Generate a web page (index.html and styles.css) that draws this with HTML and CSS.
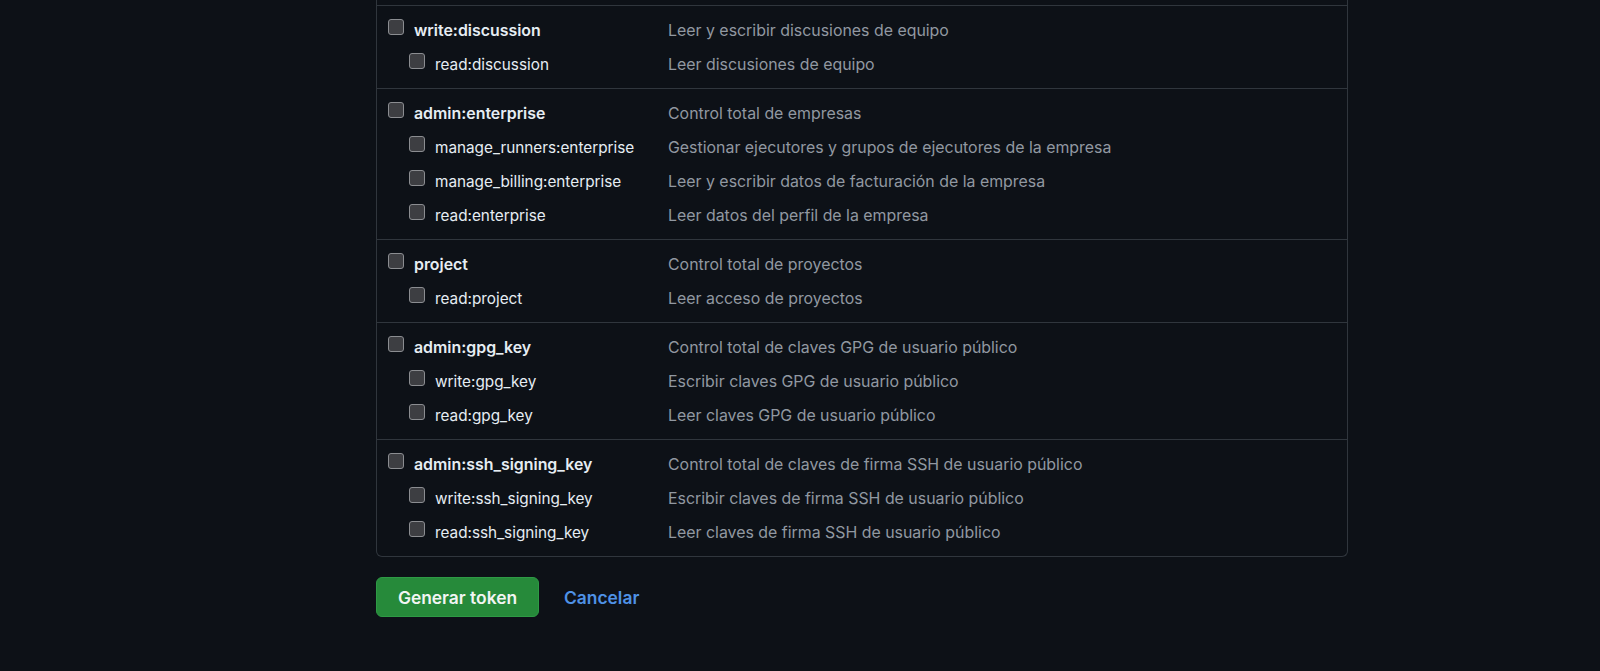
FILE: index.html
```html
<!DOCTYPE html>
<html lang="es">
<head>
    <meta charset="UTF-8">
    <meta name="viewport" content="width=device-width, initial-scale=1.0">
    <title>Nuevo token de acceso personal</title>
    <link rel="stylesheet" href="styles.css">
</head>
<body>

    <div class="page">
        <!-- Scopes list (scrolled, the top of the box is off screen) -->
        <div class="scopes">
            <div class="scope-group">
                <label class="scope-row parent"><input type="checkbox"><span class="scope-name">write:discussion</span><span class="scope-desc">Leer y escribir discusiones de equipo</span></label>
                <label class="scope-row child"><input type="checkbox"><span class="scope-name">read:discussion</span><span class="scope-desc">Leer discusiones de equipo</span></label>
            </div>

            <div class="scope-group">
                <label class="scope-row parent"><input type="checkbox"><span class="scope-name">admin:enterprise</span><span class="scope-desc">Control total de empresas</span></label>
                <label class="scope-row child"><input type="checkbox"><span class="scope-name">manage_runners:enterprise</span><span class="scope-desc">Gestionar ejecutores y grupos de ejecutores de la empresa</span></label>
                <label class="scope-row child"><input type="checkbox"><span class="scope-name">manage_billing:enterprise</span><span class="scope-desc">Leer y escribir datos de facturación de la empresa</span></label>
                <label class="scope-row child"><input type="checkbox"><span class="scope-name">read:enterprise</span><span class="scope-desc">Leer datos del perfil de la empresa</span></label>
            </div>

            <div class="scope-group">
                <label class="scope-row parent"><input type="checkbox"><span class="scope-name">project</span><span class="scope-desc">Control total de proyectos</span></label>
                <label class="scope-row child"><input type="checkbox"><span class="scope-name">read:project</span><span class="scope-desc">Leer acceso de proyectos</span></label>
            </div>

            <div class="scope-group">
                <label class="scope-row parent"><input type="checkbox"><span class="scope-name">admin:gpg_key</span><span class="scope-desc">Control total de claves GPG de usuario público</span></label>
                <label class="scope-row child"><input type="checkbox"><span class="scope-name">write:gpg_key</span><span class="scope-desc">Escribir claves GPG de usuario público</span></label>
                <label class="scope-row child"><input type="checkbox"><span class="scope-name">read:gpg_key</span><span class="scope-desc">Leer claves GPG de usuario público</span></label>
            </div>

            <div class="scope-group">
                <label class="scope-row parent"><input type="checkbox"><span class="scope-name">admin:ssh_signing_key</span><span class="scope-desc">Control total de claves de firma SSH de usuario público</span></label>
                <label class="scope-row child"><input type="checkbox"><span class="scope-name">write:ssh_signing_key</span><span class="scope-desc">Escribir claves de firma SSH de usuario público</span></label>
                <label class="scope-row child"><input type="checkbox"><span class="scope-name">read:ssh_signing_key</span><span class="scope-desc">Leer claves de firma SSH de usuario público</span></label>
            </div>
        </div>

        <!-- Form actions -->
        <div class="form-actions">
            <button class="btn-primary">Generar token</button>
            <a href="#" class="cancel-link">Cancelar</a>
        </div>
    </div>

</body>
</html>
```

FILE: styles.css
```css
/* General Styles */
body {
    margin: 0;
    background-color: #0d1117;
    color: #e6edf3;
    font-family: Inter, "Noto Sans", sans-serif;
    font-size: 15.9px;
    overflow: hidden;
    height: 671px;
}

.page {
    padding-left: 376px;
    width: 972px;
}

/* Scopes box, scrolled so only its lower part shows */
.scopes {
    padding-top: 5px;
    border: 1px solid #30363d;
    border-top: none;
    border-radius: 0 0 6px 6px;
}

.scope-group {
    padding: 7px 10px;
    border-top: 1px solid #30363d;
}

.scope-row {
    display: flex;
    align-items: flex-start;
    height: 34px;
    line-height: 35px;
    white-space: nowrap;
}

.scope-row input[type="checkbox"] {
    appearance: none;
    width: 16px;
    height: 16px;
    margin: 6px 10px 0 1px;
    border: 1px solid #8b8d91;
    border-radius: 3px;
    background-color: #3d3e42;
    flex-shrink: 0;
}

.scope-name {
    width: 254px;
}

.parent .scope-name {
    font-weight: 600;
}

.child input[type="checkbox"] {
    margin-left: 22px;
}

.child .scope-name {
    width: 233px;
    font-size: 15.3px;
}

.scope-desc {
    color: #9198a1;
}

/* Buttons */
.form-actions {
    display: flex;
    align-items: center;
    gap: 25px;
    margin-top: 20px;
}

.btn-primary {
    width: 163px;
    height: 40px;
    background-color: #268a3a;
    color: #f2f5f3;
    border: 1px solid #2e9a45;
    border-radius: 6px;
    font-family: inherit;
    font-size: 17.4px;
    font-weight: 600;
    cursor: pointer;
}

.cancel-link {
    color: #4f92e6;
    font-size: 17.4px;
    font-weight: 600;
    text-decoration: none;
}
```
